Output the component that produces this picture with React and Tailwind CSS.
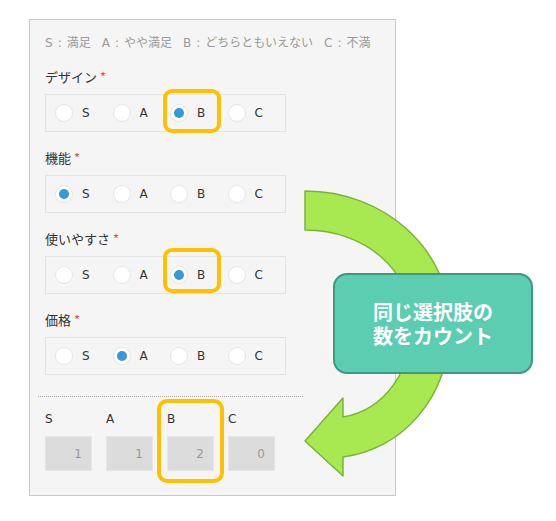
import React from 'react';

const font = { fontFamily: '"DejaVu Sans", "Noto Sans CJK JP", sans-serif' };
const jpFont = { fontFamily: '"Noto Sans CJK JP", sans-serif' };

const fields = [
  { label: 'デザイン', value: 'B' },
  { label: '機能', value: 'S' },
  { label: '使いやすさ', value: 'B' },
  { label: '価格', value: 'A' },
];

const legend = [
  ['S', '満足'],
  ['A', 'やや満足'],
  ['B', 'どちらともいえない'],
  ['C', '不満'],
];

const counts = [
  { key: 'S', n: 1 },
  { key: 'A', n: 1 },
  { key: 'B', n: 2 },
  { key: 'C', n: 0 },
];

const Radio = ({ text, checked }) => (
  <div className="w-[59px] flex items-center gap-[9px]">
    <span className="w-[18px] h-[18px] rounded-full bg-white border border-[#e6e6e6] flex items-center justify-center">
      {checked && <span className="w-[10px] h-[10px] rounded-full bg-[#3498db]"></span>}
    </span>
    <span className="text-[12px] text-[#333]">{text}</span>
  </div>
);

export default function App() {
  return (
    <div className="relative w-[556px] h-[521px] bg-white overflow-hidden" style={font}>
      <div className="ml-[29px] mt-[19px] w-[367px] h-[477px] border border-[#c8c8c8] bg-[#f5f5f5] pt-[14px] px-[15px]">
        <div className="text-[12px] leading-[16px] text-[#999] whitespace-nowrap flex">
          {legend.map(([k, v], i) => (
            <span key={k} className={i > 0 ? 'ml-[11px]' : ''}>
              {k}
              <span className="mx-[5px]">:</span>
              <span style={jpFont}>{v}</span>
            </span>
          ))}
        </div>

        {fields.map((f) => (
          <div key={f.label} className="mt-[17px]">
            <div className="text-[13px] leading-[18px] text-[#333]" style={jpFont}>
              {f.label} <span className="text-[#e74c3c]">*</span>
            </div>
            <div className="mt-2 h-[38px] w-[241px] border border-[#e3e3e3] flex items-center pl-[9px]">
              {['S', 'A', 'B', 'C'].map((o) => (
                <Radio key={o} text={o} checked={o === f.value} />
              ))}
            </div>
          </div>
        ))}

        <div className="mt-[21px] -ml-[7px] w-[265px] border-t border-dotted border-[#aaa]"></div>

        <div className="mt-[13px] flex gap-[14px]">
          {counts.map((c) => (
            <div key={c.key} className="w-[47px]">
              <div className="text-[12px] leading-[18px] text-[#333]">{c.key}</div>
              <div className="mt-2 h-[35px] bg-[#dcdcdc] border border-[#e6e6e6] flex items-center justify-end pr-[9px] text-[12px] text-[#999]">
                {c.n}
              </div>
            </div>
          ))}
        </div>
      </div>

      {/* annotation highlights */}
      <div className="absolute left-[163px] top-[89px] w-[58px] h-[44px] border-[4px] border-[#ffc000] rounded-[9px]"></div>
      <div className="absolute left-[163px] top-[248px] w-[58px] h-[45px] border-[4px] border-[#ffc000] rounded-[9px]"></div>
      <div className="absolute left-[157px] top-[399px] w-[67px] h-[84px] border-[4px] border-[#ffc000] rounded-[10px]"></div>

      <svg className="absolute left-0 top-0" width="556" height="521" viewBox="0 0 556 521">
        <path
          d="M305,191 C385,191 450,250 450,324 C450,400 400,450 343,457 L343,476 L305,441 L343,398 L343,417 C385,410 412,370 412,324 C412,270 365,230 305,230 Z"
          fill="#a8e850"
          stroke="#7db23a"
          strokeWidth="1.5"
          strokeLinejoin="round"
        />
      </svg>

      <div
        className="absolute left-[333px] top-[273px] w-[200px] h-[101px] rounded-[14px] bg-[#5ccdb0] border-2 border-[#3f9880] flex flex-col items-center justify-center text-white font-bold text-[20px] leading-[24px]"
        style={jpFont}
      >
        <div>同じ選択肢の</div>
        <div>数をカウント</div>
      </div>
    </div>
  );
}
